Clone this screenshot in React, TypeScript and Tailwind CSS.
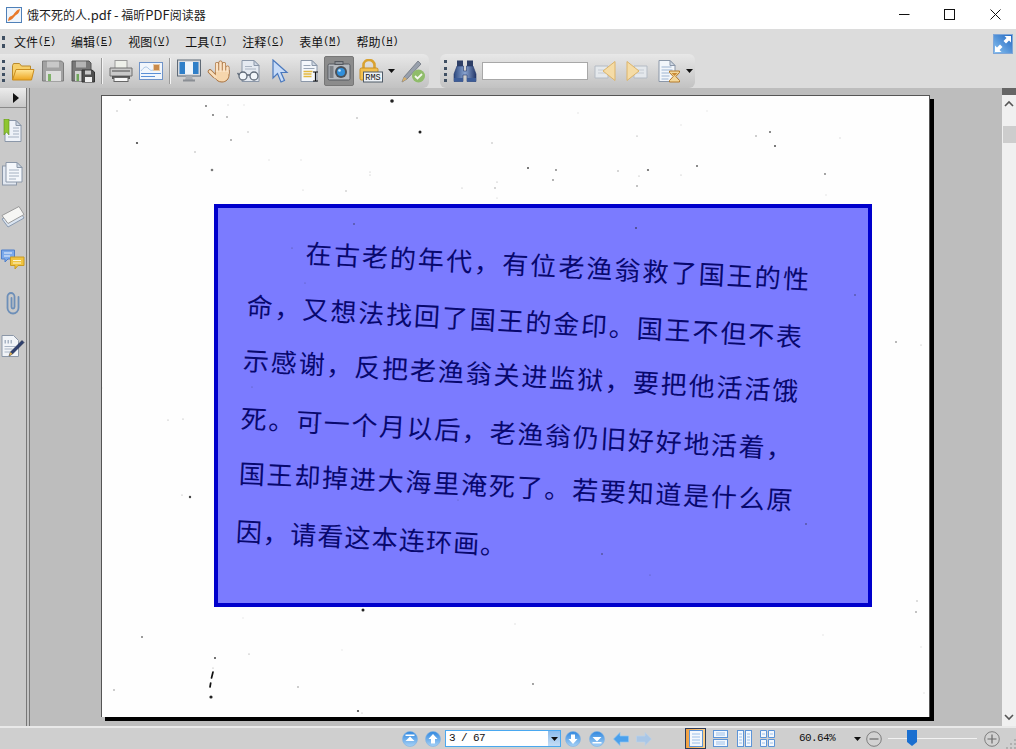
const specks: number[][] = [
  [392, 101, 1.8, 1], [420, 132, 1.5, 1], [130, 100, 0.8, 0.7], [117, 111, 0.7, 0.35], [206, 106, 0.9, 0.7],
  [213, 115, 0.9, 0.7], [227, 117, 0.8, 0.6], [137, 143, 1.1, 0.85], [231, 140, 0.8, 0.7], [248, 132, 0.8, 0.3],
  [195, 152, 0.8, 0.35], [212, 170, 1.3, 0.6], [357, 118, 0.7, 0.5], [492, 143, 0.7, 0.4], [495, 188, 0.7, 0.5],
  [497, 182, 0.6, 0.4], [462, 188, 0.6, 0.35], [346, 191, 0.7, 0.4], [303, 190, 0.6, 0.25], [370, 172, 0.6, 0.3],
  [370, 175, 0.6, 0.3], [497, 198, 0.6, 0.25], [228, 105, 0.7, 0.2], [244, 105, 0.7, 0.15], [269, 160, 0.7, 0.15],
  [301, 160, 0.8, 0.12], [528, 168, 1, 0.8], [556, 170, 0.9, 0.6], [553, 180, 0.9, 0.5], [618, 171, 0.7, 0.5],
  [648, 170, 1.1, 0.7], [639, 176, 0.6, 0.4], [637, 186, 0.8, 0.6], [697, 166, 1, 0.7], [681, 175, 0.6, 0.35],
  [637, 136, 0.6, 0.5], [756, 136, 0.7, 0.6], [770, 132, 1, 0.7], [775, 146, 1, 0.8], [825, 174, 0.9, 0.6],
  [840, 138, 0.7, 0.2], [826, 195, 0.7, 0.15], [578, 113, 0.8, 0.12], [707, 111, 0.8, 0.1], [681, 125, 0.8, 0.12],
  [363, 610, 1.5, 1], [142, 637, 1, 0.6], [215, 658, 1, 0.85], [213, 668, 0.6, 0.4], [249, 654, 0.6, 0.5],
  [114, 690, 0.8, 0.5], [298, 687, 0.7, 0.6], [211, 697, 1.6, 1], [358, 711, 1.1, 0.85], [362, 713, 0.6, 0.35],
  [342, 650, 0.7, 0.12], [243, 618, 0.7, 0.12], [533, 684, 0.9, 0.6], [916, 612, 0.8, 0.6], [917, 601, 0.7, 0.4],
  [515, 624, 0.8, 0.15], [823, 635, 0.8, 0.12], [921, 647, 0.7, 0.15], [924, 693, 0.7, 0.15], [101.5, 388, 0.7, 0.6],
  [168, 420, 0.6, 0.4], [183, 419, 0.6, 0.4], [190, 497, 1.2, 0.85], [182, 495, 0.6, 0.4], [896, 342, 0.8, 0.7],
  [921, 345, 0.6, 0.35], [292, 248, 0.6, 0.5], [354, 224, 0.8, 0.7], [305, 283, 0.6, 0.4], [252, 387, 0.6, 0.4],
  [602, 554, 0.8, 0.7], [806, 524, 0.8, 0.7], [650, 575, 0.6, 0.4], [636, 228, 1, 0.6], [855, 295, 0.8, 0.6],
  [362, 430, 0.6, 0.4], [315, 425, 0.8, 0.6], [458, 500, 0.6, 0.35],
];

const menus = [
  ["文件", "F"],
  ["编辑", "E"],
  ["视图", "V"],
  ["工具", "T"],
  ["注释", "C"],
  ["表单", "M"],
  ["帮助", "H"],
];

// full-width comma of the scanned page
const C = "\uFF0C";

function Grip({ className }: { className: string }) {
  return <div className={`w-[3px] border-l-[3px] border-dotted border-[#3f4f62] ${className}`} />;
}

function Sep() {
  return <div className="h-[26px] w-[2px] border-l border-r border-l-[#9a9a9a] border-r-[#f4f4f4]" />;
}

function Caret({ className }: { className: string }) {
  return (
    <svg viewBox="0 0 7 4" className={`h-[4px] w-[7px] ${className}`}>
      <path d="M0 0h7L3.5 4z" fill="#111" />
    </svg>
  );
}

function Doc({ fill = "#f4f7fb", stroke = "#8b97a8" }: { fill?: string; stroke?: string }) {
  return (
    <>
      <path d="M4 1.500h11l5 5v16H4z" fill={fill} stroke={stroke} />
      <path d="M15 1.500v5h5z" fill="#cfd8e4" stroke={stroke} />
    </>
  );
}

function Folder() {
  return (
    <svg viewBox="0 0 24 24" className="h-6 w-6">
      <defs>
        <linearGradient id="fo" x1="0" y1="0" x2="0" y2="1">
          <stop offset="0" stopColor="#ffe79a" />
          <stop offset="1" stopColor="#eda51f" />
        </linearGradient>
      </defs>
      <path d="M1.500 21V6.500l1-2h6l2 2.500h9v3" fill="#f6cf6a" stroke="#b98a2c" />
      <path d="M1.500 21 5 10.500h18L20.500 21z" fill="url(#fo)" stroke="#c98c1e" />
    </svg>
  );
}

function Floppy() {
  return (
    <svg viewBox="0 0 24 24" className="h-6 w-6">
      <path d="M1.500 2h19l2 2v18h-21z" fill="#a2a2a2" stroke="#7c7c7c" />
      <rect x="6" y="2.500" width="12" height="6" fill="#c8c8c8" />
      <rect x="5" y="12" width="15" height="10" fill="#dddddd" />
      <rect x="7" y="15" width="3" height="7" fill="#7fb26a" />
    </svg>
  );
}

function FloppyAs() {
  return (
    <svg viewBox="0 0 24 24" className="h-6 w-6">
      <path d="M1 2h17l2 2v18H1z" fill="#777" stroke="#555" />
      <rect x="5" y="2.500" width="10" height="6" fill="#b5b5b5" />
      <rect x="4" y="12" width="8" height="10" fill="#d2d2d2" />
      <rect x="5.500" y="15" width="2.500" height="7" fill="#6fa65a" />
      <path d="M11 11h10l2.500 2v10H11z" fill="#4f4f4f" stroke="#333" />
      <rect x="14" y="11.500" width="6" height="4" fill="#c9c9c9" />
      <rect x="14" y="18" width="7" height="5" fill="#eee" />
    </svg>
  );
}

function Printer() {
  return (
    <svg viewBox="0 0 24 24" className="h-6 w-6">
      <rect x="6" y="1.500" width="12" height="8" fill="#eef0ea" stroke="#9a9a9a" />
      <path d="M1 9h22v8H1z" fill="#c9c9c9" stroke="#6f6f6f" />
      <rect x="3" y="11" width="18" height="2" fill="#8a8a8a" />
      <path d="M3 17h18v3H3z" fill="#555" />
      <rect x="5" y="18.500" width="14" height="4" fill="#f8f8f8" stroke="#666" />
    </svg>
  );
}

function Card() {
  return (
    <svg viewBox="0 0 24 24" className="h-6 w-6">
      <rect x="0.500" y="3.500" width="23" height="17" fill="#f1f6fc" stroke="#6f93c8" />
      <path d="M2 12c3-4 5-5 7-3s3 3 5 2" fill="none" stroke="#a9c5e6" />
      <rect x="14.500" y="5.500" width="6" height="6" fill="#c98a4a" stroke="#e8c9a5" />
      <path d="M2 14.500h20M2 17.500h14" stroke="#5a8fd6" />
    </svg>
  );
}

function Monitor() {
  return (
    <svg viewBox="0 0 24 24" className="h-6 w-6">
      <rect x="0.500" y="1" width="23" height="16" fill="#d8dade" stroke="#5f6a76" />
      <rect x="2.500" y="3" width="19" height="12" fill="#2f7fc8" />
      <rect x="8" y="3" width="8" height="12" fill="#eef5fb" />
      <path d="M9 17h6l1 4H8z" fill="#a9adb2" />
      <rect x="6" y="20.500" width="12" height="2" fill="#8a8e94" />
    </svg>
  );
}

function Hand() {
  const fingers = "M10 13V5M13.500 12V3.500M17 13V5M20.500 14V8.500";
  return (
    <svg viewBox="0 0 24 24" className="h-6 w-6">
      <path d="M3 12.500 7.500 17" stroke="#a8703c" strokeWidth="4.500" strokeLinecap="round" fill="none" />
      <path d={fingers} stroke="#a8703c" strokeWidth="4" strokeLinecap="round" fill="none" />
      <path d="M8.500 11h13.500v5c0 4-3 7-7 7-3.500 0-5-1.500-7-4z" fill="#f6d6ad" stroke="#a8703c" />
      <path d="M3 12.500 8.500 18" stroke="#f9dfbd" strokeWidth="2.800" strokeLinecap="round" fill="none" />
      <path d={fingers} stroke="#fbe3c6" strokeWidth="2.600" strokeLinecap="round" fill="none" />
      <path d="M9 13h12v5c-2 3-8 4-11 1z" fill="#f6d6ad" />
    </svg>
  );
}

function GlassesDoc() {
  return (
    <svg viewBox="0 0 24 24" className="h-6 w-6">
      <path d="M5 1.500h12l5 5v16H5z" fill="#e5eaf1" stroke="#8b97a8" />
      <path d="M17 1.500v5h5z" fill="#cfd8e4" stroke="#8b97a8" />
      <path d="M8 10h11M8 7.500h7" stroke="#aab4c2" />
      <circle cx="6" cy="17" r="4" fill="#f2f6fa" stroke="#5f6a78" strokeWidth="1.300" />
      <circle cx="17" cy="17" r="4" fill="#f2f6fa" stroke="#5f6a78" strokeWidth="1.300" />
      <path d="M10 16h3M2 16 0.500 14" stroke="#5f6a78" strokeWidth="1.300" />
    </svg>
  );
}

function Pointer() {
  return (
    <svg viewBox="0 0 24 24" className="h-6 w-6">
      <path d="M6 1v18l4.500-4.500 3.500 8.500 3.500-1.500-3.500-8h6z" fill="#c8dcf8" stroke="#4a78bd" strokeWidth="1.200" />
    </svg>
  );
}

function TextDoc() {
  return (
    <svg viewBox="0 0 24 24" className="h-6 w-6">
      <Doc />
      <path d="M6.500 6.500h7M6.500 9.500h11" stroke="#9aa6b6" />
      <path d="M6.500 12.500h9M6.500 15h8M6.500 17.500h8" stroke="#e3b93f" strokeWidth="1.600" />
      <path d="M16 13h5M18.500 13v9M16 22h5" stroke="#111" strokeWidth="1.200" fill="none" />
    </svg>
  );
}

function Camera() {
  return (
    <svg viewBox="0 0 24 24" className="h-6 w-6">
      <rect x="1" y="5" width="22" height="16" rx="1.500" fill="#b7bbc0" stroke="#55595f" />
      <rect x="8" y="2.500" width="8" height="3" fill="#8e9297" stroke="#55595f" />
      <rect x="2.500" y="7" width="4" height="12" fill="#7e8287" />
      <circle cx="14" cy="13" r="6" fill="#4b5158" />
      <circle cx="14" cy="13" r="4" fill="#2f8fdc" />
      <circle cx="12.500" cy="11.500" r="1.300" fill="#c9e6fb" />
    </svg>
  );
}

function RmsLock() {
  return (
    <svg viewBox="0 0 24 24" className="h-6 w-6">
      <path d="M4.500 10V6a5.500 5 0 0 1 11 0v4" fill="none" stroke="#d9a231" strokeWidth="2.600" />
      <rect x="1" y="9" width="18" height="12" rx="1.500" fill="#f2c04f" stroke="#c98f24" />
      <rect x="4.500" y="13" width="19" height="10" fill="#eef2f6" stroke="#4f5a66" />
      <text x="14" y="21.300" textAnchor="middle" fontSize="8.500" fontFamily="Liberation Mono, monospace" fill="#111">
        RMS
      </text>
    </svg>
  );
}

function PenCheck() {
  return (
    <svg viewBox="0 0 24 24" className="h-6 w-6">
      <path d="M1 23 3 18 17 2l3 3L6 20z" fill="#98a0ac" stroke="#666c76" strokeWidth="0.700" />
      <path d="M1 23 3 18l3 2z" fill="#d8b06a" />
      <circle cx="17.500" cy="17" r="6.500" fill="#8fbc6a" />
      <path d="m14 17 2.500 2.500L21 15" fill="none" stroke="#f4f8ee" strokeWidth="1.800" />
    </svg>
  );
}

function Binoculars() {
  return (
    <svg viewBox="0 0 24 24" className="h-6 w-6">
      <defs>
        <linearGradient id="bn" x1="0" y1="0" x2="1" y2="0">
          <stop offset="0" stopColor="#2e4a80" />
          <stop offset="0.500" stopColor="#8aa4d0" />
          <stop offset="1" stopColor="#24386a" />
        </linearGradient>
      </defs>
      <rect x="4" y="1.500" width="6" height="6" fill="#2e3f66" />
      <rect x="14" y="1.500" width="6" height="6" fill="#2e3f66" />
      <path d="M4 7h6.500v5h3V7H20l3 8v7.500h-9V16h-4v6.500H1V15z" fill="url(#bn)" stroke="#24386a" strokeWidth="0.600" />
      <rect x="1" y="19" width="9" height="3.500" fill="#3c5c98" />
      <rect x="14" y="19" width="9" height="3.500" fill="#3c5c98" />
    </svg>
  );
}

function PrevHit({ flip }: { flip?: boolean }) {
  return (
    <svg viewBox="0 0 24 24" className={flip ? "h-6 w-6 -scale-x-100" : "h-6 w-6"}>
      <path d="M1 7h13v12H1z" fill="#e4e8ec" stroke="#b4bbc4" />
      <path d="M4 11h8M4 14h8" stroke="#c4cad2" />
      <path d="M21 2.500v19L9 12z" fill="#f5dca6" stroke="#dcb46a" />
    </svg>
  );
}

function DocHourglass() {
  return (
    <svg viewBox="0 0 26 24" className="h-6 w-[26px]">
      <Doc fill="#f2f6fb" />
      <path d="M6.500 8h10M6.500 11h11M6.500 14h8M6.500 17h8M6.500 20h7" stroke="#9db4d2" />
      <path d="M14.500 12h10v1.500l-3.700 4 3.700 4V23h-10v-1.500l3.700-4-3.700-4z" fill="#f3d79a" stroke="#b47a2a" />
      <path d="M16.500 14h6l-3 3z" fill="#c98a34" />
    </svg>
  );
}

function SideIcon({ kind }: { kind: string }) {
  if (kind === "bookmark")
    return (
      <svg viewBox="0 0 24 24" className="h-6 w-6">
        <Doc fill="#eef2f8" />
        <path d="M12 9h6M12 12h6M12 15h6M7 18h11" stroke="#a4b0c0" />
        <path d="M3 0h5v16l-2.500-3L3 16z" fill="#8fc631" stroke="#5e8f1e" strokeWidth="0.600" />
      </svg>
    );
  if (kind === "pages")
    return (
      <svg viewBox="0 0 24 24" className="h-6 w-6">
        <rect x="1.500" y="4" width="14" height="19" fill="#e2e8f1" stroke="#8b97a8" />
        <path d="M5 0.500h11l5 5V20H5z" fill="#f4f7fb" stroke="#8b97a8" />
        <path d="M16 0.500v5h5z" fill="#cfd8e4" stroke="#8b97a8" />
        <path d="M8 8h10M8 11h10M8 14h10M8 17h7" stroke="#a4b0c0" />
      </svg>
    );
  if (kind === "layers")
    return (
      <svg viewBox="0 0 24 24" className="h-6 w-6">
        <path d="m1 14 17-9 5 8-16 9z" fill="#dbe5f1" stroke="#8a9ab0" />
        <path d="m1 10.500 17-9 5 8-16 9z" fill="#f6f6f4" stroke="#9a9a9a" />
      </svg>
    );
  if (kind === "comments")
    return (
      <svg viewBox="0 0 24 24" className="h-6 w-6">
        <path d="M0.500 2h13v9H7l-3 3v-3H0.500z" fill="#7ba9ea" stroke="#4e7fca" />
        <path d="M3 5h8M3 8h6" stroke="#eef4fc" />
        <path d="M9.500 9h13.500v8.500h-6l-3 3.500v-3.500H9.500z" fill="#f0c440" stroke="#c99a22" />
        <path d="M12 12.500h8M12 15h8" stroke="#fdf6d8" />
      </svg>
    );
  if (kind === "clip")
    return (
      <svg viewBox="0 0 24 24" className="h-6 w-6">
        <path
          d="M17.500 6v11a5.500 5.500 0 0 1-11 0V5.500a3.500 3.500 0 0 1 7 0V16a1.500 1.500 0 0 1-3 0V7"
          fill="none"
          stroke="#6d8fb8"
          strokeWidth="1.800"
          strokeLinecap="round"
        />
      </svg>
    );
  return (
    <svg viewBox="0 0 24 24" className="h-6 w-6">
      <path d="M1 1.500h11.500l5 5v16H1z" fill="#f1f4f8" stroke="#8b97a8" />
      <path d="M3.500 6h1.500v3.500H3.500zM6.500 6H8v3.500H6.500zM9.500 6H11v3.500H9.500z" fill="#a8b4c4" />
      <path d="M3.500 12.500h11M3.500 15h8M3.500 18h6" stroke="#aab6c6" />
      <path d="M8 22 9.500 18 21 6.500l2 2L11.500 20z" fill="#2d3f6e" stroke="#16223f" strokeWidth="0.600" />
      <path d="M8 22 9.500 18l2 2z" fill="#e0b050" />
    </svg>
  );
}

function NavBall({ up, bar }: { up?: boolean; bar?: boolean }) {
  return (
    <svg viewBox="0 0 16 16" className="h-4 w-4">
      <defs>
        <linearGradient id="ball" x1="0" y1="0" x2="0" y2="1">
          <stop offset="0" stopColor="#2f86de" />
          <stop offset="1" stopColor="#a7d2f6" />
        </linearGradient>
      </defs>
      <circle cx="8" cy="8" r="7.500" fill="url(#ball)" stroke="#7ab0e4" strokeWidth="0.600" />
      <g transform={up ? undefined : "rotate(180 8 8)"}>
        {bar ? (
          <path d="M3.500 3.500h9v1.500h-9zM8 5.500l4.500 4.500h-9z" fill="#fff" />
        ) : (
          <path d="M8 3l4.500 5H10v4.500H6V8H3.500z" fill="#fff" />
        )}
      </g>
    </svg>
  );
}

function NavArrow({ right, faded }: { right?: boolean; faded?: boolean }) {
  return (
    <svg viewBox="0 0 16 14" className={right ? "h-[14px] w-4 -scale-x-100" : "h-[14px] w-4"}>
      <path
        d="M0.500 7 7 0.500V4h8.500v6H7v3.500z"
        fill={faded ? "#a9c6e6" : "#4aa0ec"}
        stroke={faded ? "#bcd2ea" : "#8cc4f4"}
        strokeWidth="0.700"
      />
    </svg>
  );
}

function ViewIcon({ kind }: { kind: string }) {
  if (kind === "single")
    return (
      <div className="flex h-[21px] w-[21px] items-center justify-center border border-[#2a3a5a] bg-gradient-to-r from-[#f0a040] to-[#fad08a]">
        <svg viewBox="0 0 14 17" className="h-[17px] w-[14px]">
          <rect x="0.500" y="0.500" width="13" height="16" fill="#f4f8fd" stroke="#5c94d8" />
          <path d="M3 4h8M3 7h8M3 10h8M3 13h8" stroke="#9cc0ea" />
        </svg>
      </div>
    );
  if (kind === "continuous")
    return (
      <svg viewBox="0 0 15 17" className="h-[17px] w-[15px]">
        <rect x="0.500" y="0.500" width="14" height="7" fill="#f4f8fd" stroke="#5c94d8" />
        <rect x="0.500" y="9.500" width="14" height="7" fill="#f4f8fd" stroke="#5c94d8" />
        <path d="M3 3h9M3 5h9M3 12h9M3 14h9" stroke="#9cc0ea" />
      </svg>
    );
  if (kind === "facing")
    return (
      <svg viewBox="0 0 15 17" className="h-[17px] w-[15px]">
        <rect x="0.500" y="0.500" width="6" height="16" fill="#f4f8fd" stroke="#5c94d8" />
        <rect x="8.500" y="0.500" width="6" height="16" fill="#f4f8fd" stroke="#5c94d8" />
        <path d="M2 4h3M2 7h3M2 10h3M2 13h3M10 4h3M10 7h3M10 10h3M10 13h3" stroke="#9cc0ea" />
      </svg>
    );
  return (
    <svg viewBox="0 0 15 17" className="h-[17px] w-[15px]">
      <path
        d="M0.500 0.500h6v7h-6zM8.500 0.500h6v7h-6zM0.500 9.500h6v7h-6zM8.500 9.500h6v7h-6z"
        fill="#f4f8fd"
        stroke="#5c94d8"
      />
      <path d="M2 4h3M10 4h3M2 13h3M10 13h3" stroke="#9cc0ea" />
    </svg>
  );
}

function ZoomCircle({ plus }: { plus?: boolean }) {
  return (
    <svg viewBox="0 0 16 16" className="h-4 w-4">
      <circle cx="8" cy="8" r="7.300" fill="#d2d2d2" stroke="#7d7d7d" />
      <path d={plus ? "M3.500 8h9M8 3.500v9" : "M3.500 8h9"} stroke="#6a6a6a" strokeWidth="1.200" />
    </svg>
  );
}

export default function App() {
  return (
    <div className="flex h-[749px] w-[1016px] flex-col overflow-hidden bg-white font-['Noto_Sans_CJK_SC',sans-serif] text-black">
      {/* title bar */}
      <div className="flex h-[29px] items-center bg-white">
        <svg viewBox="0 0 16 16" className="ml-[6px] h-4 w-4">
          <rect x="0.500" y="0.500" width="15" height="15" fill="#eef4fb" stroke="#4f80b8" />
          <path d="M2 14c1-6 3-4 5-6s3-5 7-6c-1 5-3 5-5 7s-3 4-7 5z" fill="#e8792a" />
        </svg>
        <span className="ml-[5px] whitespace-pre text-[12px] leading-none text-[#1c1c1c]">
          饿不死的人<span className="text-[13px]">.pdf - </span>福昕<span className="text-[13px]">PDF</span>阅读器
        </span>
        <div className="ml-auto flex items-center">
          <svg viewBox="0 0 11 11" className="h-[11px] w-[11px]">
            <path d="M0 5.500h10.500" stroke="#111" />
          </svg>
          <svg viewBox="0 0 11 11" className="ml-[34px] h-[11px] w-[11px]">
            <rect x="0.500" y="0.500" width="10" height="10" fill="none" stroke="#111" />
          </svg>
          <svg viewBox="0 0 11 11" className="mr-[15px] ml-[35px] h-[11px] w-[11px]">
            <path d="m0.500 0.500 10 10M10.500 0.500l-10 10" stroke="#111" />
          </svg>
        </div>
      </div>

      {/* menu bar */}
      <div className="flex h-[25px] items-center bg-[#dcdcdc]">
        <Grip className="ml-[2px] h-[12px]" />
        <div className="ml-[9px] flex gap-[15px] text-[12px] leading-none text-[#111]">
          {menus.map(([label, key]) => (
            <span key={key} className="flex items-center whitespace-nowrap">
              {label}
              <span className="font-['Liberation_Mono',monospace] text-[10px]">
                (<span className="underline">{key}</span>)
              </span>
            </span>
          ))}
        </div>
        <svg viewBox="0 0 20 20" className="mt-[4px] mr-[3px] ml-auto h-5 w-5">
          <defs>
            <linearGradient id="mx" x1="1" y1="0" x2="0" y2="1">
              <stop offset="0" stopColor="#1f66c0" />
              <stop offset="1" stopColor="#8cc4f2" />
            </linearGradient>
          </defs>
          <rect x="0.500" y="0.500" width="19" height="19" fill="url(#mx)" stroke="#7fa6d8" />
          <path d="M18 2v6.500l-2-2-3 3-2.500-2.500 3-3-2-2zM2 18v-6.500l2 2 3-3L9.500 13l-3 3 2 2z" fill="#fff" />
        </svg>
      </div>

      {/* toolbars */}
      <div className="flex h-[34px] items-stretch bg-[#dcdcdc]">
        <div className="flex w-[429px] items-center rounded-tr-md rounded-br-md bg-gradient-to-b from-[#e8e8e8] to-[#c2c2c2]">
          <Grip className="ml-[2px] h-[22px]" />
          <div className="ml-[6px] flex gap-[6px]">
            <Folder />
            <Floppy />
            <FloppyAs />
          </div>
          <div className="ml-[6px]">
            <Sep />
          </div>
          <div className="ml-[6px] flex gap-[6px]">
            <Printer />
            <Card />
          </div>
          <div className="ml-[6px]">
            <Sep />
          </div>
          <div className="ml-[6px] flex gap-[6px]">
            <Monitor />
            <Hand />
            <GlassesDoc />
            <Pointer />
            <TextDoc />
          </div>
          <div className="ml-[3px] flex h-[30px] w-[30px] items-center justify-center rounded-[2px] border border-[#777] bg-[#8c8c8c]">
            <Camera />
          </div>
          <div className="ml-[5px]">
            <RmsLock />
          </div>
          <Caret className="ml-[5px]" />
          <div className="ml-[6px]">
            <PenCheck />
          </div>
        </div>
        <div className="ml-[11px] flex w-[255px] items-center rounded-md bg-gradient-to-b from-[#e8e8e8] to-[#c2c2c2]">
          <Grip className="ml-[4px] h-[22px]" />
          <div className="ml-[6px]">
            <Binoculars />
          </div>
          <div className="ml-[5px] h-[18px] w-[106px] border border-[#a8a8a8] bg-white" />
          <div className="ml-[6px]">
            <PrevHit />
          </div>
          <div className="ml-[6px]">
            <PrevHit flip />
          </div>
          <div className="ml-[7px]">
            <DocHourglass />
          </div>
          <Caret className="ml-[5px]" />
        </div>
      </div>

      {/* main area */}
      <div className="flex min-h-0 flex-1">
        <div className="flex w-[30px] border-r border-[#777] bg-[#c4c4c4]">
          <div className="flex w-[27px] flex-col border-r border-[#777] bg-[#c9c9c9]">
            <div className="flex h-[20px] items-center justify-end border-b border-[#8a8a8a] bg-gradient-to-b from-[#ececec] to-[#c8c8c8] pr-[7px]">
              <svg viewBox="0 0 6 10" className="h-[10px] w-[6px]">
                <path d="M0 0l6 5-6 5z" fill="#111" />
              </svg>
            </div>
            <div className="flex flex-1 flex-col gap-[19px] pt-[11px]">
              {["bookmark", "pages", "layers", "comments", "clip", "sign"].map((kind) => (
                <div key={kind} className="flex w-[26px] justify-center">
                  <SideIcon kind={kind} />
                </div>
              ))}
            </div>
          </div>
        </div>

        <div className="min-w-0 flex-1 bg-[#bdbdbd] pt-[7px] pl-[71px]">
          <div className="relative h-[622px] w-[829px] border-t border-r border-l border-[#555] bg-[#fefefe] shadow-[4px_4px_0_#000]">
            <div className="absolute top-[108px] left-[112px] h-[403px] w-[658px] overflow-hidden border-4 border-[#0000cc] bg-[#7b7bff] pt-[16px] text-[26px] leading-[55px] whitespace-nowrap text-[#08086e]">
              <p className="ml-[88px] h-[53px] origin-left rotate-[3deg] tracking-[2.100px]">
                在古老的年代{C}有位老渔翁救了国王的性
              </p>
              <p className="ml-[29px] h-[54px] origin-left rotate-[3.200deg] tracking-[1.900px]">
                命{C}又想法找回了国王的金印。国王不但不表
              </p>
              <p className="ml-[25px] h-[58px] origin-left rotate-[3.200deg] tracking-[1.900px]">
                示感谢{C}反把老渔翁关进监狱{C}要把他活活饿
              </p>
              <p className="ml-[23px] h-[55px] origin-left rotate-[3.200deg] tracking-[1.700px]">
                死。可一个月以后{C}老渔翁仍旧好好地活着{C}
              </p>
              <p className="ml-[21px] h-[58px] origin-left rotate-[2.800deg] tracking-[1.800px]">
                国王却掉进大海里淹死了。若要知道是什么原
              </p>
              <p className="ml-[18px] h-[55px] origin-left rotate-[3deg] tracking-[1.200px]">
                因{C}请看这本连环画。
              </p>
            </div>
            {/* scan specks */}
            <svg viewBox="102 96 827 621" className="absolute top-0 left-0 h-[621px] w-[827px]">
              {specks.map(([x, y, r, o]) => (
                <circle key={`${x}-${y}`} cx={x} cy={y} r={r} fill="#222" opacity={o} />
              ))}
              <path d="M213 672l-1.500 6M210.700 683l-.7 4" stroke="#111" strokeWidth="1.700" strokeLinecap="round" />
            </svg>
          </div>
        </div>

        <div className="flex w-[14px] flex-col bg-[#f0f0f0]">
          <div className="h-[7px] bg-[#666]" />
          <svg viewBox="0 0 14 8" className="mt-[5px] h-2 w-[14px]">
            <path d="m3 6 4-4 4 4" fill="none" stroke="#555" strokeWidth="1.600" />
          </svg>
          <div className="mt-[18px] ml-[1px] h-[17px] bg-[#cdcdcd]" />
          <svg viewBox="0 0 14 8" className="mt-auto mb-[5px] h-2 w-[14px]">
            <path d="m3 2 4 4 4-4" fill="none" stroke="#555" strokeWidth="1.600" />
          </svg>
        </div>
      </div>

      {/* status bar */}
      <div className="relative flex h-[23px] items-center border-t-2 border-[#e9e9e9] bg-[#cfcfcf]">
        <div className="ml-[402px] flex items-center">
          <NavBall up bar />
          <div className="ml-[7px]">
            <NavBall up />
          </div>
          <div className="ml-[4px] flex h-[17px] w-[116px] items-center border border-[#4aa8f0] bg-white pl-[3px] font-['Liberation_Mono',monospace] text-[11px] tracking-[-0.600px] text-[#111]">
            3 / 67
            <div className="ml-auto flex h-[15px] w-[12px] items-center justify-center bg-gradient-to-b from-[#8cbcec] to-[#c4ddf5]">
              <Caret className="" />
            </div>
          </div>
          <div className="ml-[4px]">
            <NavBall />
          </div>
          <div className="ml-[8px]">
            <NavBall bar />
          </div>
          <div className="ml-[8px]">
            <NavArrow />
          </div>
          <div className="ml-[7px]">
            <NavArrow right faded />
          </div>
        </div>
        <div className="ml-[33px] flex items-center">
          <ViewIcon kind="single" />
          <div className="ml-[7px]">
            <ViewIcon kind="continuous" />
          </div>
          <div className="ml-[9px]">
            <ViewIcon kind="facing" />
          </div>
          <div className="ml-[8px]">
            <ViewIcon kind="grid" />
          </div>
        </div>
        <span className="ml-[24px] font-['Liberation_Mono',monospace] text-[11px] tracking-[-0.600px] text-[#111]">
          60.64%
        </span>
        <Caret className="ml-[19px]" />
        <div className="ml-[5px]">
          <ZoomCircle />
        </div>
        <div className="relative ml-[6px] h-[1px] w-[89px] bg-[#f2f2f2]">
          <svg viewBox="0 0 10 16" className="absolute -top-[8px] left-[19px] h-4 w-[10px]">
            <path d="M0 0h10v12l-5 4-5-4z" fill="#1a6fd0" />
          </svg>
        </div>
        <div className="ml-[7px]">
          <ZoomCircle plus />
        </div>
        <svg viewBox="0 0 11 11" className="absolute right-0 bottom-0 h-[11px] w-[11px]">
          <path d="M9 1h2v2H9zM5 5h2v2H5zM9 5h2v2H9zM1 9h2v2H1zM5 9h2v2H5zM9 9h2v2H9z" fill="#b0b0b0" />
        </svg>
      </div>
    </div>
  );
}
